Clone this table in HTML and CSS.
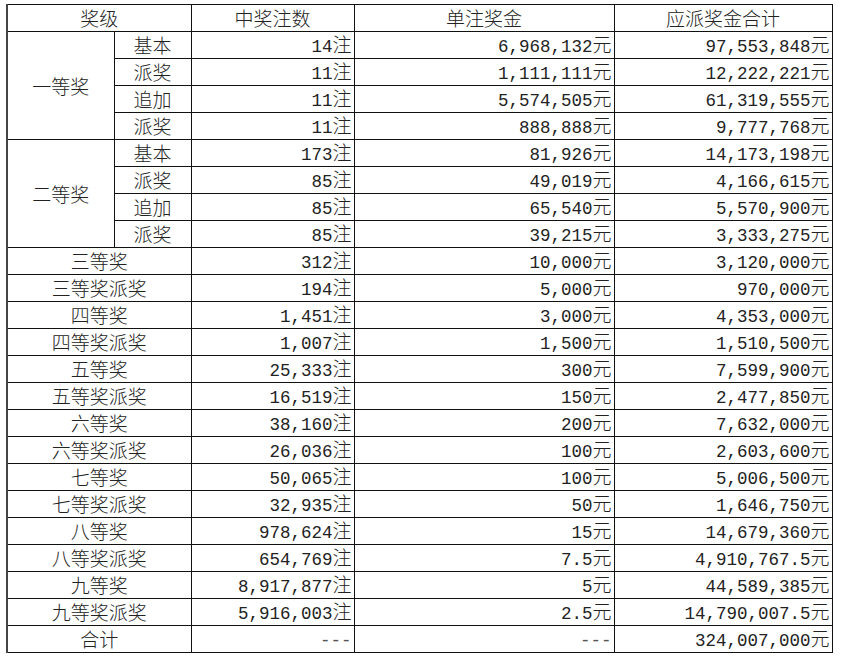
FILE: index.html
```html
<!DOCTYPE html>
<html lang="zh-CN">
<head>
<meta charset="utf-8">
<title>开奖详情</title>
<link rel="stylesheet" href="styles.css">
</head>
<body>
<table class="prize">
  <colgroup>
    <col class="c1"><col class="c2"><col class="c3"><col class="c4"><col class="c5">
  </colgroup>
  <thead>
    <tr><th colspan="2">奖级</th><th>中奖注数</th><th>单注奖金</th><th>应派奖金合计</th></tr>
  </thead>
  <tbody>
    <tr><td rowspan="4" class="lvl">一等奖</td><td class="sub">基本</td><td class="num"><span class="n">14</span>注</td><td class="num"><span class="n">6,968,132</span>元</td><td class="num"><span class="n">97,553,848</span>元</td></tr>
    <tr><td class="sub">派奖</td><td class="num"><span class="n">11</span>注</td><td class="num"><span class="n">1,111,111</span>元</td><td class="num"><span class="n">12,222,221</span>元</td></tr>
    <tr><td class="sub">追加</td><td class="num"><span class="n">11</span>注</td><td class="num"><span class="n">5,574,505</span>元</td><td class="num"><span class="n">61,319,555</span>元</td></tr>
    <tr><td class="sub">派奖</td><td class="num"><span class="n">11</span>注</td><td class="num"><span class="n">888,888</span>元</td><td class="num"><span class="n">9,777,768</span>元</td></tr>
    <tr><td rowspan="4" class="lvl">二等奖</td><td class="sub">基本</td><td class="num"><span class="n">173</span>注</td><td class="num"><span class="n">81,926</span>元</td><td class="num"><span class="n">14,173,198</span>元</td></tr>
    <tr><td class="sub">派奖</td><td class="num"><span class="n">85</span>注</td><td class="num"><span class="n">49,019</span>元</td><td class="num"><span class="n">4,166,615</span>元</td></tr>
    <tr><td class="sub">追加</td><td class="num"><span class="n">85</span>注</td><td class="num"><span class="n">65,540</span>元</td><td class="num"><span class="n">5,570,900</span>元</td></tr>
    <tr><td class="sub">派奖</td><td class="num"><span class="n">85</span>注</td><td class="num"><span class="n">39,215</span>元</td><td class="num"><span class="n">3,333,275</span>元</td></tr>
    <tr><td colspan="2" class="name">三等奖</td><td class="num"><span class="n">312</span>注</td><td class="num"><span class="n">10,000</span>元</td><td class="num"><span class="n">3,120,000</span>元</td></tr>
    <tr><td colspan="2" class="name">三等奖派奖</td><td class="num"><span class="n">194</span>注</td><td class="num"><span class="n">5,000</span>元</td><td class="num"><span class="n">970,000</span>元</td></tr>
    <tr><td colspan="2" class="name">四等奖</td><td class="num"><span class="n">1,451</span>注</td><td class="num"><span class="n">3,000</span>元</td><td class="num"><span class="n">4,353,000</span>元</td></tr>
    <tr><td colspan="2" class="name">四等奖派奖</td><td class="num"><span class="n">1,007</span>注</td><td class="num"><span class="n">1,500</span>元</td><td class="num"><span class="n">1,510,500</span>元</td></tr>
    <tr><td colspan="2" class="name">五等奖</td><td class="num"><span class="n">25,333</span>注</td><td class="num"><span class="n">300</span>元</td><td class="num"><span class="n">7,599,900</span>元</td></tr>
    <tr><td colspan="2" class="name">五等奖派奖</td><td class="num"><span class="n">16,519</span>注</td><td class="num"><span class="n">150</span>元</td><td class="num"><span class="n">2,477,850</span>元</td></tr>
    <tr><td colspan="2" class="name">六等奖</td><td class="num"><span class="n">38,160</span>注</td><td class="num"><span class="n">200</span>元</td><td class="num"><span class="n">7,632,000</span>元</td></tr>
    <tr><td colspan="2" class="name">六等奖派奖</td><td class="num"><span class="n">26,036</span>注</td><td class="num"><span class="n">100</span>元</td><td class="num"><span class="n">2,603,600</span>元</td></tr>
    <tr><td colspan="2" class="name">七等奖</td><td class="num"><span class="n">50,065</span>注</td><td class="num"><span class="n">100</span>元</td><td class="num"><span class="n">5,006,500</span>元</td></tr>
    <tr><td colspan="2" class="name">七等奖派奖</td><td class="num"><span class="n">32,935</span>注</td><td class="num"><span class="n">50</span>元</td><td class="num"><span class="n">1,646,750</span>元</td></tr>
    <tr><td colspan="2" class="name">八等奖</td><td class="num"><span class="n">978,624</span>注</td><td class="num"><span class="n">15</span>元</td><td class="num"><span class="n">14,679,360</span>元</td></tr>
    <tr><td colspan="2" class="name">八等奖派奖</td><td class="num"><span class="n">654,769</span>注</td><td class="num"><span class="n">7.5</span>元</td><td class="num"><span class="n">4,910,767.5</span>元</td></tr>
    <tr><td colspan="2" class="name">九等奖</td><td class="num"><span class="n">8,917,877</span>注</td><td class="num"><span class="n">5</span>元</td><td class="num"><span class="n">44,589,385</span>元</td></tr>
    <tr><td colspan="2" class="name">九等奖派奖</td><td class="num"><span class="n">5,916,003</span>注</td><td class="num"><span class="n">2.5</span>元</td><td class="num"><span class="n">14,790,007.5</span>元</td></tr>
    <tr><td colspan="2" class="name">合计</td><td class="num"><span class="n dash">---</span></td><td class="num"><span class="n dash">---</span></td><td class="num"><span class="n">324,007,000</span>元</td></tr>
  </tbody>
</table>
</body>
</html>
```

FILE: styles.css
```css
html, body {
  margin: 0;
  padding: 0;
  background: #fff;
}

body {
  padding: 4px 0 0 6px;
}

.prize {
  border-collapse: collapse;
  table-layout: fixed;
  width: 825px;
  font-family: "Noto Sans CJK SC", "Noto Sans", sans-serif;
  font-size: 19px;
  font-weight: 300;
  color: #222;
  border-left: 2px solid #444;
}

.c1 { width: 107px; }
.c2 { width: 77px; }
.c3 { width: 163px; }
.c4 { width: 260px; }
.c5 { width: 218px; }

.prize th,
.prize td {
  border: 1px solid #111;
  height: 26px;
  padding: 0 2px;
  line-height: 22px;
  white-space: nowrap;
  font-weight: 300;
  vertical-align: middle;
}

.prize th,
.prize .lvl,
.prize .sub,
.prize .name {
  text-align: center;
}

.prize .num {
  text-align: right;
}

.n {
  font-family: "Liberation Mono", monospace;
  font-size: 17.5px;
  font-weight: 400;
  line-height: 1;
}

.dash {
  color: #555;
}
```
